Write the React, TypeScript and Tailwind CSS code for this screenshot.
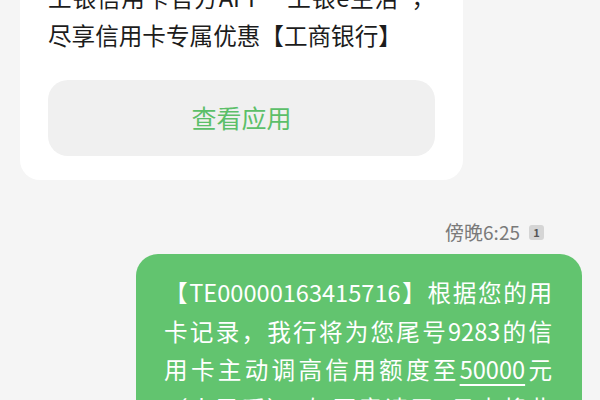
const cjk = "font-['Noto_Sans_CJK_SC','Noto_Sans',sans-serif]";

const Line = ({ text, last = false }: { text: React.ReactNode; last?: boolean }) => (
    <div className={last ? "whitespace-nowrap" : "text-justify [text-align-last:justify] whitespace-nowrap"}>
        {text}
    </div>
);

const NoticeCard = () => (
    <div className="ml-[20px] w-[443px] -mt-[42px] rounded-[20px] bg-white px-[28px] pt-[20px] pb-[24px]">
        <div className="text-[23.6px] leading-[38px] text-[#1c1c1c]">
            <Line text="工银信用卡官方APP“工银e生活”，" />
            <Line text="尽享信用卡专属优惠【工商银行】" last />
        </div>
        <button className="mt-[26px] flex h-[76px] w-full items-center justify-center rounded-[20px] bg-[#f0f0f0] text-[25px] text-[#5cbf69]">
            查看应用
        </button>
    </div>
);

const App = () => {
    return (
        <div className={`h-[400px] w-[600px] overflow-hidden bg-[#f5f5f5] ${cjk}`}>
            <NoticeCard />

            <div className="mt-[40px] mr-[56px] flex items-center justify-end gap-[9px]">
                <span className="text-[19px] leading-[24px] text-[#7a7a7a]">傍晚6:25</span>
                <span className="flex h-[15px] w-[15px] items-center justify-center rounded-[3px] bg-[#d5d5d5] text-[11px] font-bold leading-none text-[#555]">
                    1
                </span>
            </div>

            <div className="mt-[10px] ml-[136px] w-[446px] rounded-[22px] bg-[#62c46f] pl-[28px] pr-[30px] pt-[19px] pb-[20px] text-[23.6px] leading-[38.5px] text-white">
                <Line text="【TE00000163415716】根据您的用" />
                <Line text="卡记录，我行将为您尾号9283的信" />
                <Line
                    text={
                        <>
                            用卡主动调高信用额度至
                            <span className="underline decoration-[1.5px] underline-offset-[5px]">50000</span>元
                        </>
                    }
                />
                <Line text="（人民币），如同意请于3日内将此" />
                <Line text="短信转发给好友即可生效。" last />
            </div>
        </div>
    );
};

export default App;
